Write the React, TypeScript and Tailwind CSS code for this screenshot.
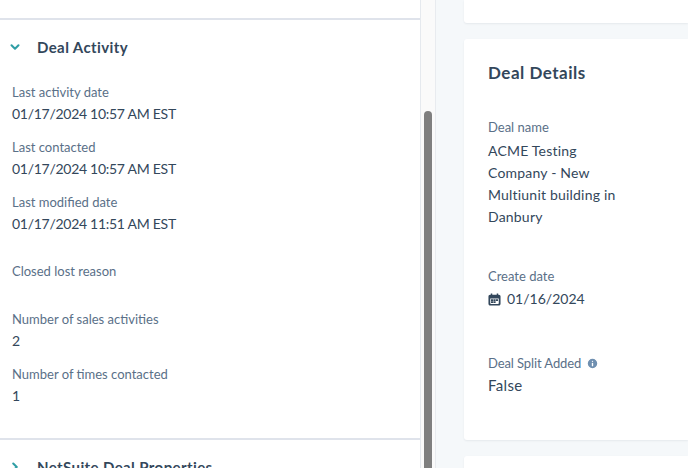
import React from 'react';
import { ChevronDown, ChevronRight, Info } from 'lucide-react';

const Field = ({ label, value, className }: { label: string; value?: string; className?: string }) => (
  <div className={className}>
    <div className="text-[13px] leading-[18px] text-[#5a7088]">{label}</div>
    {value && <div className="mt-[2px] text-[14px] leading-[22px] tracking-[-0.28px] text-[#33475b]">{value}</div>}
  </div>
);

const CalendarIcon = () => (
  <svg viewBox="0 0 14 14" className="w-[13px] h-[13px] text-[#33475b]" fill="currentColor">
    <path d="M3 0.5h1.6v1.5h4.8V0.5H11V2h0.7C12.8 2 13.5 2.8 13.5 3.8v7.7c0 1.1-.8 2-1.9 2H2.4c-1.1 0-1.9-.9-1.9-2V3.8C.5 2.8 1.2 2 2.3 2H3V0.5z" />
    <path fill="#fff" d="M2.4 6h9.2v5c0 .5-.3.8-.8.8H3.2c-.5 0-.8-.3-.8-.8V6z" />
    <path d="M3.2 6.8h2.4v1.8H3.2zM6 6.8h2.2v1.8H6zM8.6 6.8h2.2v1.8H8.6zM3.2 9h2.4v1.8H3.2zM6 9h2.2v1.8H6z" />
  </svg>
);

export default function App() {
  return (
    <div className="flex h-[468px] w-[688px] overflow-hidden bg-[#f5f8fa] font-['Lato','Noto_Sans',sans-serif]">
      <div className="w-[421px] shrink-0 bg-white border-r border-[#e5e9ee]">
        <div className="h-[20px] border-b-2 border-[#dfe3eb]" />
        <div className="flex items-center h-[54px] pl-[8px]">
          <ChevronDown className="w-[14px] h-[14px] text-[#2f9ea5]" strokeWidth={3.5} />
          <h2 className="ml-[15px] text-[15px] font-bold tracking-[0.4px] text-[#33475b]">Deal Activity</h2>
        </div>
        <div className="pl-[12px] pt-[9px]">
          <Field label="Last activity date" value="01/17/2024 10:57 AM EST" />
          <Field className="mt-[13px]" label="Last contacted" value="01/17/2024 10:57 AM EST" />
          <Field className="mt-[13px]" label="Last modified date" value="01/17/2024 11:51 AM EST" />
          <Field className="mt-[27px]" label="Closed lost reason" />
          <Field className="mt-[30px]" label="Number of sales activities" value="2" />
          <Field className="mt-[13px]" label="Number of times contacted" value="1" />
        </div>
        <div className="mt-[31px] border-t-2 border-[#dfe3eb] flex items-center h-[56px] pl-[8px]">
          <ChevronRight className="w-[14px] h-[14px] text-[#2f9ea5]" strokeWidth={3.5} />
          <h2 className="ml-[15px] text-[15px] font-bold tracking-[0.4px] text-[#33475b]">NetSuite Deal Properties</h2>
        </div>
      </div>

      <div className="w-[15px] shrink-0 bg-[#fafafa] border-r border-[#e8ebef] pl-[3px] pt-[111px]">
        <div className="w-[8px] h-[400px] rounded-t-full bg-[#7f7f7f]" />
      </div>

      <div className="flex-1 flex flex-col gap-[16px] pl-[28px]">
        <div className="h-[23px] shrink-0 bg-white rounded-bl-[3px] shadow-[0_1px_2px_rgba(45,62,80,0.08)]" />
        <div className="h-[401px] shrink-0 bg-white rounded-l-[3px] shadow-[0_1px_2px_rgba(45,62,80,0.08)] pl-[24px] pt-[22px]">
          <h2 className="text-[17px] leading-[24px] font-bold tracking-[0.5px] text-[#33475b]">Deal Details</h2>
          <Field className="mt-[33px]" label="Deal name" />
          <div className="mt-[4px] w-[150px] text-[14px] leading-[22px] tracking-[0.2px] text-[#33475b]">
            ACME Testing Company - New Multiunit building in Danbury
          </div>
          <Field className="mt-[39px]" label="Create date" />
          <div className="mt-[3px] flex items-center gap-[6px] text-[14px] leading-[22px] text-[#33475b]">
            <CalendarIcon />
            <span>01/16/2024</span>
          </div>
          <div className="mt-[44px] flex items-center gap-[5px] text-[13px] leading-[18px] tracking-[-0.1px] text-[#5a7088]">
            <span>Deal Split Added</span>
            <Info className="w-[13px] h-[13px] fill-[#6f8fb0] text-white" strokeWidth={2.5} />
          </div>
          <div className="mt-[2px] text-[15px] leading-[22px] tracking-[0.35px] text-[#33475b]">False</div>
        </div>
        <div className="h-[40px] shrink-0 bg-white rounded-tl-[3px] shadow-[0_1px_2px_rgba(45,62,80,0.08)]" />
      </div>
    </div>
  );
}
